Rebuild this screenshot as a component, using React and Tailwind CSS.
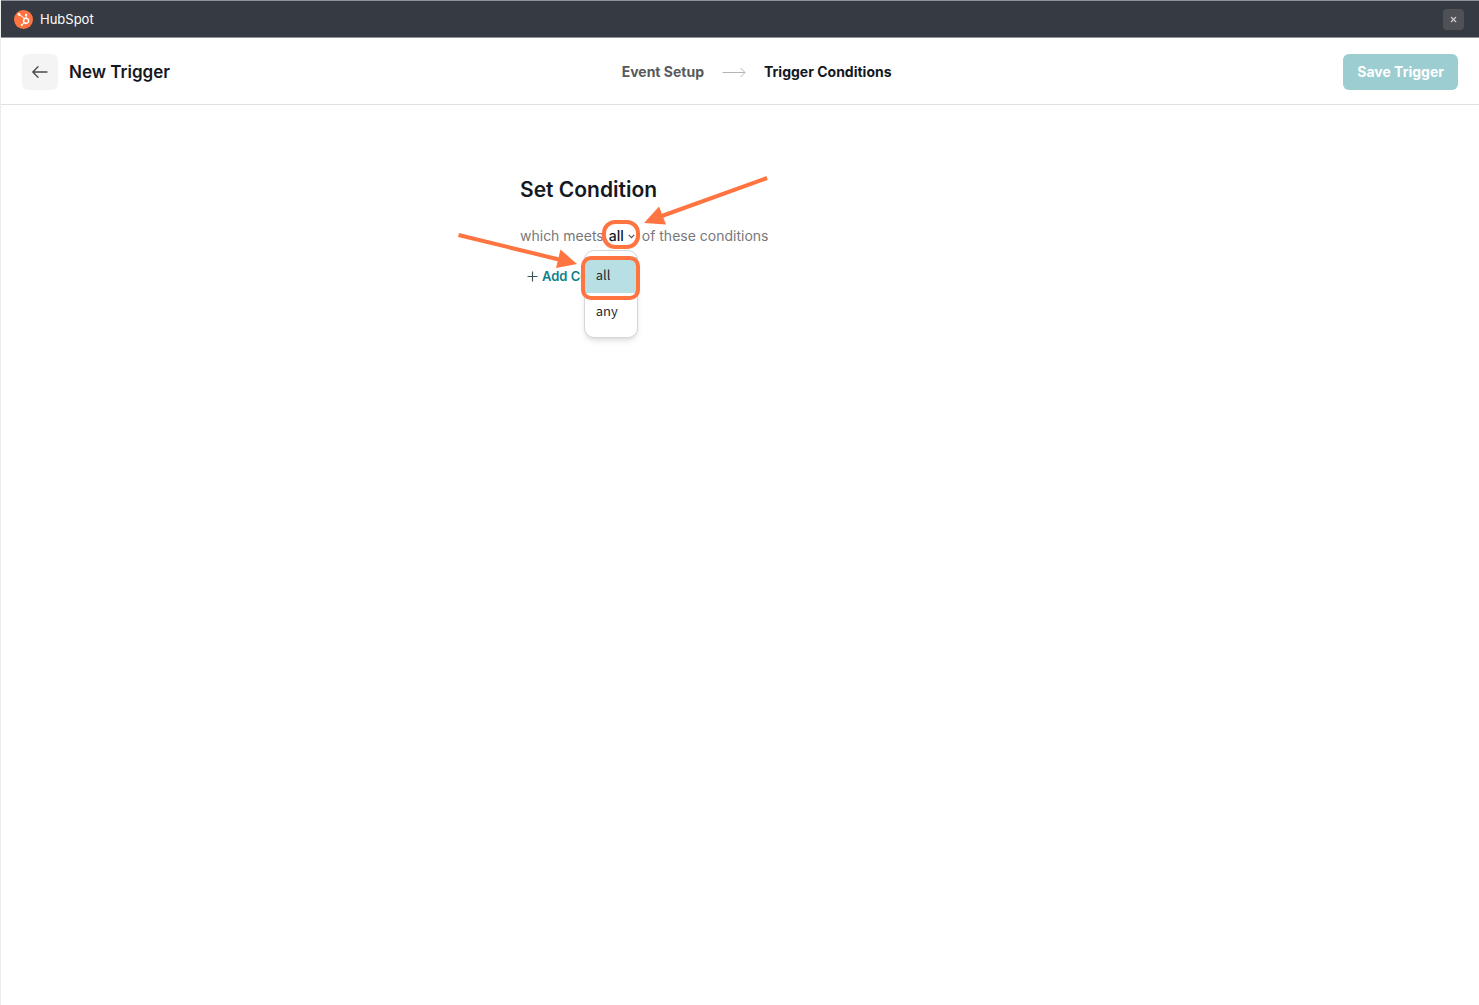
import React, { useState } from 'react';
import { X } from 'lucide-react';
import { FaHubspot } from 'react-icons/fa';

const OPTIONS = ['all', 'any'];

const TitleBar = () => (
    <div className="flex items-center justify-between h-[38px] pl-[13px] pr-[15px] bg-[#363a43] border-t border-b border-[#8f9297] shrink-0">
        <div className="flex items-center gap-[7px]">
            <span className="w-[19px] h-[19px] rounded-full bg-[#ff7440] flex items-center justify-center">
                <FaHubspot size={13} className="text-white" />
            </span>
            <span className="text-[13px] leading-5 text-white">HubSpot</span>
        </div>
        <button aria-label="Close" className="w-[21px] h-[21px] rounded bg-[#505156] flex items-center justify-center">
            <X size={9} strokeWidth={3} className="text-[#cfd0d2]" />
        </button>
    </div>
);

const Header = () => (
    <header className="flex items-center justify-between pt-4 pb-[14px] px-[21px] border-b border-[#e1e1e1] shrink-0">
        <div className="flex items-center gap-[11px]">
            <button aria-label="Back" className="w-9 h-9 rounded-md bg-[#f4f4f4] flex items-center justify-center">
                <svg width="16" height="12" viewBox="0 0 16 12" fill="none" stroke="#484848" strokeWidth="1.3" strokeLinecap="round" strokeLinejoin="round">
                    <path d="M15 6H0.800M6 0.800L0.800 6L6 11.200" />
                </svg>
            </button>
            <h1 className="text-[17px] leading-6 font-semibold text-[#14191f]">New Trigger</h1>
        </div>

        <nav className="flex items-center gap-[18px] text-sm font-bold">
            <a href="#event-setup" className="text-[#58595b]">Event Setup</a>
            <svg width="24" height="10" viewBox="0 0 24 10" fill="none" stroke="#b4b4b4" strokeWidth="1">
                <path d="M0.500 5.500H23M18.500 1L23 5.500L18.500 10" />
            </svg>
            <a href="#trigger-conditions" className="text-[#14191f]">Trigger Conditions</a>
        </nav>

        <button className="h-9 px-[14px] rounded-md bg-[#9bcdd1] text-white text-sm font-bold">Save Trigger</button>
    </header>
);

const ConditionMenu = ({ value, onSelect }) => (
    <div role="listbox" aria-label="Match conditions" className="absolute z-10 top-6 -left-[25px] w-[54px] h-[88px] pt-[6px] rounded-[10px] bg-white border border-[#d6d6d6] shadow-md">
        {OPTIONS.map(option => (
            <button
                key={option}
                role="option"
                aria-selected={option === value}
                onClick={() => onSelect(option)}
                className={`block w-full h-9 pl-[11px] text-left text-[13px] leading-9 text-[#24282d] font-['Noto_Sans_CJK_JP',sans-serif] ${option === value ? 'bg-[#b8dfe3]' : ''}`}
            >
                {option}
            </button>
        ))}
        {/* Highlight around the first option */}
        <span className="absolute -left-[4px] top-[5px] w-[59px] h-[44px] rounded-[10px] border-4 border-[#ff7440] pointer-events-none" />
    </div>
);

const App = () => {
    const [match, setMatch] = useState('all');

    return (
        <div className="min-h-screen flex flex-col bg-white border-l border-[#ececec] font-[Inter,sans-serif]">
            <TitleBar />
            <Header />

            <main className="relative w-full max-w-[440px] mx-auto pt-[71px]">
                <h2 className="text-[21px] leading-7 font-semibold text-[#14191f]">Set Condition</h2>

                <div className="flex items-center mt-[22px] text-sm leading-5 text-[#77787a]">
                    <label htmlFor="match">which meets</label>
                    <div className="relative flex items-center ml-[5px] mr-[7px]">
                        <select
                            id="match"
                            value={match}
                            onChange={(e) => setMatch(e.target.value)}
                            className="appearance-none w-[26px] h-5 bg-transparent outline-none text-sm leading-5 font-medium text-[#14191f]"
                        >
                            {OPTIONS.map(option => <option key={option}>{option}</option>)}
                        </select>
                        <svg width="7" height="5" viewBox="0 0 7 5" fill="none" stroke="#555" strokeWidth="1.200" className="absolute right-0 pointer-events-none">
                            <path d="M0.800 0.800L3.500 3.600L6.200 0.800" />
                        </svg>
                        <ConditionMenu value={match} onSelect={setMatch} />
                        <span className="absolute -left-[7px] -top-[6px] w-[38px] h-[29px] rounded-[13px] border-4 border-[#ff7440] pointer-events-none" />
                    </div>
                    <span>of these conditions</span>
                </div>

                <button className="flex items-center gap-1 mt-5 ml-[7px] text-[13px] leading-5 font-semibold text-[#0e8189]">
                    <svg width="11" height="11" viewBox="0 0 11 11" stroke="#3f5559" strokeWidth="1.200">
                        <path d="M5.500 0.500V10.500M0.500 5.500H10.500" />
                    </svg>
                    Add Condition
                </button>

                {/* Pointer arrows */}
                <svg width="320" height="110" viewBox="0 0 320 110" className="absolute z-20 top-[65px] -left-[65px] pointer-events-none" fill="#ff7440" stroke="#ff7440">
                    <path d="M312 8L204 47" strokeWidth="4" />
                    <path d="M189 53L204 36.500L211 54.500Z" stroke="none" />
                    <path d="M3.500 65L106 90" strokeWidth="4" />
                    <path d="M122 94L105.500 79.500L101 98Z" stroke="none" />
                </svg>
            </main>
        </div>
    );
};

export default App;
